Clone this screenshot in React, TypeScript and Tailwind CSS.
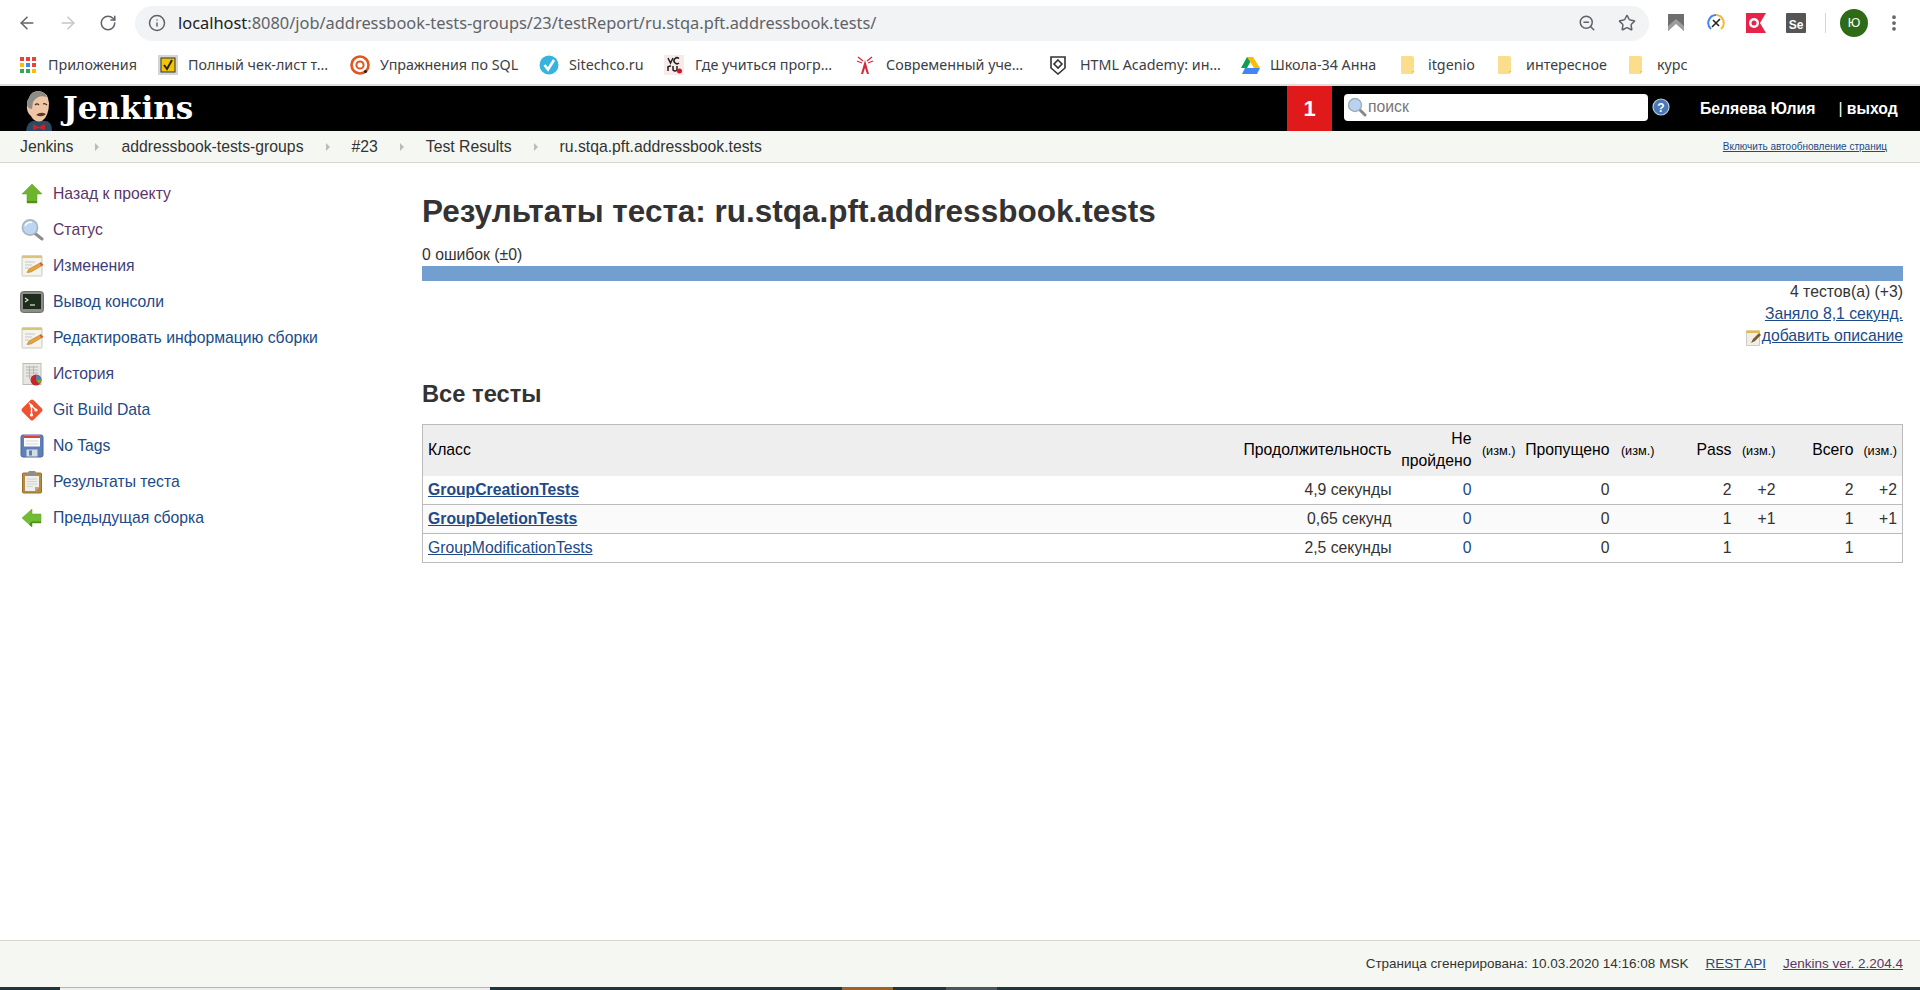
import { ArrowLeft, ArrowRight, Info, MoreVertical, RotateCw, Star, ZoomOut } from 'lucide-react';
import type { ReactNode } from 'react';

const Svg = ({ children, className = 'w-6 h-6', box = '0 0 24 24' }: { children: ReactNode; className?: string; box?: string }) => (
  <svg viewBox={box} className={`${className} shrink-0`}>{children}</svg>
);

// ---- sidebar icons ----
const UpArrow = () => (
  <Svg>
    <path d="M12 2 L22 12 H17 V21 H7 V12 H2 Z" fill="#6cb52d" stroke="#5a9e22" strokeWidth="0.5" />
    <path d="M7 19 H17 V21 H7 Z" fill="#4e8f1c" />
  </Svg>
);
const Magnifier = () => (
  <Svg>
    <path d="M14.5 15 L22 21" stroke="#8c8c8c" strokeWidth="3" strokeLinecap="round" />
    <circle cx="10" cy="9.5" r="7.6" fill="#bcd6f2" stroke="#aab4c0" strokeWidth="1.6" />
    <path d="M5 8 A5.5 5.5 0 0 1 12 4.5" stroke="#fff" strokeWidth="1.4" fill="none" />
  </Svg>
);
const Notepad = () => (
  <Svg>
    <rect x="2" y="2" width="20" height="20" rx="1" fill="#f4f4ec" stroke="#c9c9bd" />
    <rect x="2" y="1.5" width="20" height="2.5" fill="#d9c27c" />
    <path d="M5 8 H15 M5 11 H12 M5 14 H9" stroke="#c5c5c5" strokeWidth="1" />
    <path d="M7 18.5 L9 15 L21 8.5 L23 11 L11 18 Z" fill="#e8a33d" stroke="#a56a1f" strokeWidth="0.5" />
    <path d="M21 8.5 L23 11 L21.5 12 L19.5 9.4 Z" fill="#d9534f" />
  </Svg>
);
const Terminal = () => (
  <Svg>
    <rect x="0.5" y="1.5" width="23" height="21" rx="3" fill="#8b8d86" stroke="#6d6f69" />
    <rect x="3" y="4" width="18" height="15" fill="#1e2c1d" />
    <path d="M5 8 L8 10 L5 12" stroke="#dfe8df" strokeWidth="1.1" fill="none" />
    <path d="M10 15 H15" stroke="#dfe8df" strokeWidth="1.2" />
  </Svg>
);
const History = () => (
  <Svg>
    <rect x="3" y="1.5" width="18" height="21" fill="#e6e6e2" stroke="#bdbdb8" />
    <path d="M6 5 H18 M6 8 H18 M6 11 H18 M6 14 H12 M9.5 4 V17 M13.5 4 V12" stroke="#b5b8b0" strokeWidth="1" />
    <circle cx="16" cy="18" r="5.5" fill="#c8242b" />
    <path d="M16 18 L16 13 A5.5 5.5 0 0 1 21.5 18 Z" fill="#4a7fb8" />
    <path d="M16 18 L21.5 18 A5.5 5.5 0 0 1 19 22 Z" fill="#7aa83a" />
  </Svg>
);
const GitIcon = () => (
  <Svg>
    <rect x="4" y="4" width="16" height="16" rx="2" transform="rotate(45 12 12)" fill="#f0522f" />
    <path d="M9 5 L16 12 M11.5 8 V17" stroke="#fff" strokeWidth="1.4" />
    <circle cx="11.5" cy="8" r="1.6" fill="#fff" />
    <circle cx="16" cy="12" r="1.6" fill="#fff" />
    <circle cx="11.5" cy="17" r="1.6" fill="#fff" />
  </Svg>
);
const Floppy = () => (
  <Svg>
    <rect x="1" y="1" width="22" height="22" rx="2" fill="#5d80b8" stroke="#4a6898" />
    <rect x="4" y="1.5" width="16" height="11" fill="#fbfbfb" />
    <rect x="4" y="1.5" width="16" height="2.5" fill="#d8433c" />
    <path d="M6 7 H18 M6 10 H18" stroke="#cfcfcf" strokeWidth="0.8" />
    <rect x="6.5" y="15.5" width="11" height="7" fill="#d7dbe2" />
    <rect x="9" y="16.5" width="3" height="5" fill="#5d80b8" />
  </Svg>
);
const Clipboard = () => (
  <Svg>
    <rect x="2.5" y="3" width="19" height="20" rx="1" fill="#b98a42" stroke="#9a7030" />
    <path d="M5 6 H19 V17 L15 21 H5 Z" fill="#eeeeec" />
    <path d="M15 21 L15 17 H19 Z" fill="#a8a8a4" />
    <path d="M7 9 H17 M7 11.5 H17 M7 14 H17 M7 16.5 H13" stroke="#d2d2cf" strokeWidth="1" />
    <rect x="8" y="1" width="8" height="5" rx="1.5" fill="#8d8f8a" />
  </Svg>
);
const LeftArrow = () => (
  <Svg>
    <path d="M2 12 L12 3 V8 H21 V17 H12 V21 Z" fill="#72bb35" stroke="#62a52a" strokeWidth="0.5" />
    <path d="M12 15.5 H21 V17 H12 V21 L9 18.5 Z" fill="#4e8f1c" />
  </Svg>
);

const sideLinks = [
  { icon: <UpArrow />, label: 'Назад к проекту', color: 'text-[#5c3566]' },
  { icon: <Magnifier />, label: 'Статус', color: 'text-[#5c3566]' },
  { icon: <Notepad />, label: 'Изменения', color: 'text-[#3a3f7c]' },
  { icon: <Terminal />, label: 'Вывод консоли', color: 'text-[#204a87]' },
  { icon: <Notepad />, label: 'Редактировать информацию сборки', color: 'text-[#204a87]' },
  { icon: <History />, label: 'История', color: 'text-[#3a3f7c]' },
  { icon: <GitIcon />, label: 'Git Build Data', color: 'text-[#204a87]' },
  { icon: <Floppy />, label: 'No Tags', color: 'text-[#204a87]' },
  { icon: <Clipboard />, label: 'Результаты теста', color: 'text-[#204a87]' },
  { icon: <LeftArrow />, label: 'Предыдущая сборка', color: 'text-[#204a87]' },
];

// ---- bookmark icons ----
const AppsIcon = () => (
  <svg viewBox="0 0 16 16" className="w-4 h-4 shrink-0">
    {['#ea4335', '#ea4335', '#ea4335', '#fbbc05', '#4285f4', '#ea4335', '#34a853', '#34a853', '#fbbc05'].map((c, i) => (
      <rect key={i} x={(i % 3) * 6} y={Math.floor(i / 3) * 6} width="4" height="4" fill={c} />
    ))}
  </svg>
);
const Fav = ({ children }: { children: ReactNode }) => (
  <svg viewBox="0 0 20 20" className="w-5 h-5 shrink-0">{children}</svg>
);
const FolderIcon = () => (
  <svg viewBox="0 0 16 20" className="w-4 h-5 shrink-0">
    <path d="M1 2 Q1 1 2 1 H12 Q14 1 14 3 V16 L12 19 H2 Q1 19 1 18 Z" fill="#fbde8b" />
    <path d="M12 19 V16 H14.5 Z" fill="#eec25c" />
  </svg>
);

const bookmarks = [
  { icon: <AppsIcon />, label: 'Приложения', cls: 'w-[158px] pl-[20px] gap-[12px]' },
  {
    icon: (
      <Fav>
        <rect width="20" height="20" fill="#d5d5d5" />
        <rect x="3" y="3" width="14" height="14" fill="#f5c400" stroke="#333" />
        <path d="M6 10 L9 14 L14 5" stroke="#222" strokeWidth="2" fill="none" />
      </Fav>
    ),
    label: 'Полный чек-лист т...',
    cls: 'w-[192px] gap-[10px]',
  },
  {
    icon: (
      <Fav>
        <circle cx="10" cy="10" r="8.5" fill="none" stroke="#e2561d" strokeWidth="2.6" />
        <circle cx="10" cy="10" r="3.6" fill="none" stroke="#e2561d" strokeWidth="2" />
        <circle cx="15.5" cy="16.5" r="1.6" fill="#222" />
      </Fav>
    ),
    label: 'Упражнения по SQL',
    cls: 'w-[189px] gap-[10px]',
  },
  {
    icon: (
      <Fav>
        <circle cx="10" cy="10" r="9.5" fill="#38b3e0" />
        <path d="M5.5 10 L9 14.5 L15 5" stroke="#fff" strokeWidth="2.6" fill="none" />
      </Fav>
    ),
    label: 'Sitechco.ru',
    cls: 'w-[125px] gap-[10px]',
  },
  {
    icon: (
      <Fav>
        <rect width="20" height="20" fill="#f8e9ea" />
        <path d="M4 3 L6.5 8 L9 3 M15 3.5 A3 3 0 1 0 15 8 M4 11 V16 M4 12 Q5 11 7 11 M9 11 V15 Q11 17 13 15 V11" stroke="#222" strokeWidth="1.5" fill="none" />
        <circle cx="15.5" cy="16" r="2.5" fill="#d7132c" />
      </Fav>
    ),
    label: 'Где учиться прогр...',
    cls: 'w-[191px] gap-[11px]',
  },
  {
    icon: (
      <Fav>
        <path d="M10 5 L14 19 H12 L10 13 L8 19 H6 Z" fill="#d9263a" />
        <path d="M3 2 L8 6 M17 2 L12 6 M2 6 L7 8 M18 6 L13 8" stroke="#d9263a" strokeWidth="1.3" />
      </Fav>
    ),
    label: 'Современный уче...',
    cls: 'w-[193px] gap-[11px]',
  },
  {
    icon: (
      <Fav>
        <path d="M3 2 H17 V13 L10 19 L3 13 Z" fill="#fff" stroke="#333" strokeWidth="1.6" />
        <path d="M10 5 L14 9 L10 13 L6 9 Z" fill="none" stroke="#333" strokeWidth="1.6" />
      </Fav>
    ),
    label: 'HTML Academy: ин...',
    cls: 'w-[192px] gap-[12px]',
  },
  {
    icon: (
      <Fav>
        <path d="M7 1 H13 L7 12 H1 Z" fill="#0f9d58" transform="translate(0 1)" />
        <path d="M13 2 L20 13 H14 L7 2 Z" fill="#fbbc05" />
        <path d="M5 13 H20 L17 19 H2 Z" fill="#4285f4" />
      </Fav>
    ),
    label: 'Школа-34 Анна',
    cls: 'w-[160px] gap-[10px]',
  },
  { icon: <FolderIcon />, label: 'itgenio', cls: 'w-[97px] gap-[12px]' },
  { icon: <FolderIcon />, label: 'интересное', cls: 'w-[131px] gap-[13px]' },
  { icon: <FolderIcon />, label: 'курс', cls: 'w-[70px] gap-[13px]' },
];

// ---- browser extension icons ----
const ExtIcons = () => (
  <div className="flex items-center gap-[20px]">
    <svg viewBox="0 0 20 20" className="w-5 h-5">
      <path d="M2 1 H18 V18 L10 10 L2 18 Z" fill="#6e6e6e" />
      <path d="M2 13 L10 6 L18 13 V18 L10 11 L2 18 Z" fill="#9e9e9e" />
    </svg>
    <svg viewBox="0 0 20 20" className="w-5 h-5">
      <path d="M10 2 A8 8 0 0 0 5 16" fill="none" stroke="#4285f4" strokeWidth="2" />
      <path d="M10 2 A8 8 0 0 1 15 16" fill="none" stroke="#f7b733" strokeWidth="2" />
      <path d="M6 14 L14 6 M7 7 L13 13" stroke="#222" strokeWidth="1.6" />
    </svg>
    <svg viewBox="0 0 20 20" className="w-5 h-5">
      <path d="M0 0 H20 L14 10 L20 20 H0 Z" fill="#e8234a" />
      <circle cx="8" cy="10" r="5" fill="#fff" />
      <circle cx="8" cy="10" r="2.5" fill="#e8234a" />
    </svg>
    <div className="w-5 h-5 bg-[#555] rounded-[1px] flex items-end justify-center text-white text-[12px] leading-[15px] font-bold [font-family:'Liberation_Sans',sans-serif]">Se</div>
  </div>
);

const Crumb = ({ children, last }: { children: string; last?: boolean }) => (
  <>
    <span className="text-[#333]">{children}</span>
    {!last && <span className="mx-[22px] w-0 h-0 border-y-[4px] border-y-transparent border-l-[4px] border-l-[#bbb]" />}
  </>
);

const Izm = () => <span className="text-[12.7px]">(изм.)</span>;

const rows = [
  { name: 'GroupCreationTests', bold: true, dur: '4,9 секунды', pass: '2', passD: '+2', total: '2', totalD: '+2', bg: 'bg-white' },
  { name: 'GroupDeletionTests', bold: true, dur: '0,65 секунд', pass: '1', passD: '+1', total: '1', totalD: '+1', bg: 'bg-[#fafafa]' },
  { name: 'GroupModificationTests', bold: false, dur: '2,5 секунды', pass: '1', passD: '', total: '1', totalD: '', bg: 'bg-white' },
];

const App = () => {
  return (
    <div className="h-[990px] flex flex-col overflow-hidden bg-white text-[15.75px] text-[#333] [font-family:'Liberation_Sans',Arial,sans-serif]">
      {/* Browser toolbar */}
      <div className="h-[45px] flex items-center shrink-0 [font-family:'Noto_Sans',sans-serif]">
        <div className="w-[135px] flex items-center pl-[17px] gap-[21px]">
          <ArrowLeft className="w-5 h-5 text-[#5f6368]" strokeWidth={1.8} />
          <ArrowRight className="w-5 h-5 text-[#c4c6c9]" strokeWidth={1.8} />
          <RotateCw className="w-[18px] h-[18px] text-[#5f6368]" strokeWidth={2} />
        </div>
        <div className="w-[1514px] h-[35px] mt-[1px] rounded-full bg-[#f1f3f4] flex items-center pl-[13px] pr-[13px]">
          <Info className="w-[18px] h-[18px] text-[#5f6368]" strokeWidth={2} />
          <span className="ml-[12px] flex-1 text-[16.4px] text-[#5f6368] whitespace-nowrap">
            <span className="text-[#202124]">localhost</span>:8080/job/addressbook-tests-groups/23/testReport/ru.stqa.pft.addressbook.tests/
          </span>
          <ZoomOut className="w-[18px] h-[18px] text-[#5f6368] mr-[22px]" strokeWidth={2} />
          <Star className="w-[18px] h-[18px] text-[#5f6368]" strokeWidth={2} />
        </div>
        <div className="pl-[17px]">
          <ExtIcons />
        </div>
        <div className="ml-[19px] w-px h-[20px] bg-[#d5d5d5]" />
        <div className="ml-[14px] w-[28px] h-[28px] rounded-full bg-[#2e6b16] text-white text-[13px] flex items-center justify-center">Ю</div>
        <MoreVertical className="ml-[16px] w-5 h-5 text-[#5f6368]" strokeWidth={2.5} />
      </div>

      {/* Bookmarks */}
      <div className="h-[41px] flex items-center shrink-0 border-b-2 border-[#dedede] text-[14.3px] text-[#3c4043] whitespace-nowrap [font-family:'Noto_Sans',sans-serif]">
        {bookmarks.map(b => (
          <div key={b.label} className={`flex items-center shrink-0 ${b.cls}`}>
            {b.icon}
            <span>{b.label}</span>
          </div>
        ))}
      </div>

      {/* Jenkins header */}
      <header className="h-[45px] bg-black flex items-center shrink-0 text-white">
        <div className="w-[1287px] h-full flex items-end pl-[20px]">
          <svg viewBox="0 0 36 41" className="w-[36px] h-[41px] shrink-0">
            <path d="M6 41 Q7 32 13 31 L27 31 Q32 33 32 41 Z" fill="#2a4a63" />
            <path d="M9 8 Q11 1 19 1 Q28 2 29 13 Q29 26 22 31 Q14 33 11 26 Q6 22 7 15 Q7 10 9 8 Z" fill="#f0c6a4" />
            <path d="M9 8 Q11 1 19 1 Q25 2 27 7 Q18 4 13 12 L12 19 Q8 19 7 15 Q7 10 9 8 Z" fill="#8d8d88" />
            <path d="M16 25 Q21 21 26 24 Q22 28 16 25 Z" fill="#5a3a28" />
            <path d="M15 15 Q17 13 19 15 M23 14 Q25 13 27 15" stroke="#333" strokeWidth="1.2" fill="none" />
            <path d="M13 34 L19 37 L25 34 V40 L19 38 L13 40 Z" fill="#d5202a" />
          </svg>
          <span className="self-center ml-[7px] text-[31px] font-bold leading-none [font-family:'DejaVu_Serif',serif]">Jenkins</span>
        </div>
        <div className="w-[45px] h-full bg-[#e01a1a] flex items-center justify-center text-[22px] font-bold">1</div>
        <div className="ml-[12px] mb-[3px] w-[304px] h-[27px] rounded-[4px] bg-white flex items-center pl-[3px]">
          <svg viewBox="0 0 20 20" className="w-[20px] h-[20px] shrink-0">
            <path d="M12 12 L18 18" stroke="#888" strokeWidth="3" strokeLinecap="round" />
            <circle cx="8" cy="8" r="6.5" fill="#b8d3f0" stroke="#a2acb8" strokeWidth="1.4" />
          </svg>
          <input placeholder="поиск" className="ml-[1px] w-full bg-transparent outline-none text-[15.75px] placeholder:text-[#777]" />
        </div>
        <svg viewBox="0 0 18 18" className="ml-[4px] mb-[3px] w-[18px] h-[18px] shrink-0">
          <circle cx="9" cy="9" r="8" fill="#4a78b5" stroke="#b9cbe3" strokeWidth="1.2" />
          <text x="9" y="13.5" textAnchor="middle" fontSize="12" fontWeight="bold" fill="#fff" fontFamily="Liberation Sans">?</text>
        </svg>
        <span className="ml-[30px] font-bold whitespace-nowrap">Беляева Юлия</span>
        <span className="ml-[23px] font-bold whitespace-nowrap"><span className="font-normal">|</span> выход</span>
      </header>

      {/* Breadcrumbs */}
      <div className="h-[32px] flex items-center justify-between shrink-0 bg-[#f5f8f2] border-b border-[#d3d7cf] pl-[20px] pr-[33px]">
        <div className="flex items-center whitespace-nowrap">
          <Crumb>Jenkins</Crumb>
          <Crumb>addressbook-tests-groups</Crumb>
          <Crumb>#23</Crumb>
          <Crumb>Test Results</Crumb>
          <Crumb last>ru.stqa.pft.addressbook.tests</Crumb>
        </div>
        <a className="text-[10px] text-[#204a87] underline">Включить автообновление страниц</a>
      </div>

      {/* Page body */}
      <div className="flex-1 flex min-h-0">
        <aside className="w-[422px] shrink-0 pl-[20px] pt-[13px]">
          {sideLinks.map(l => (
            <div key={l.label} className={`h-[36px] flex items-center gap-[9px] ${l.color}`}>
              {l.icon}
              <span>{l.label}</span>
            </div>
          ))}
        </aside>

        <main className="flex-1 min-w-0 pr-[17px] pt-[30px]">
          <h1 className="text-[31.5px] leading-[36px] font-bold text-[#333]">Результаты теста: ru.stqa.pft.addressbook.tests</h1>
          <div className="mt-[16px] mb-[1px] leading-[20px]">0 ошибок (±0)</div>
          <div className="h-[15px] bg-[#729fcf]" />
          <div className="text-right leading-[22px]">
            <div>4 тестов(а) (+3)</div>
            <div><a className="text-[#204a87] underline">Заняло 8,1 секунд.</a></div>
            <div className="flex justify-end items-center">
              <svg viewBox="0 0 16 16" className="w-4 h-4 mt-[3px]">
                <rect x="0.5" y="1" width="13" height="14.5" fill="#efefe6" stroke="#bbb" strokeWidth="0.7" />
                <rect x="0.5" y="0.5" width="13" height="2.5" fill="#e3b94e" />
                <path d="M5 13 L7 9 L13 3 L15 5 L9 11 Z" fill="#7a5a2a" />
              </svg>
              <a className="text-[#204a87] underline">добавить описание</a>
            </div>
          </div>

          <h2 className="mt-[34px] text-[23.7px] leading-[26px] font-bold text-[#333]">Все тесты</h2>

          <table className="mt-[17px] w-full table-fixed border-collapse border border-[#bbb]">
            <colgroup>
              <col />
              <col className="w-[170px]" />
              <col className="w-[80px]" />
              <col className="w-[44px]" />
              <col className="w-[94px]" />
              <col className="w-[45px]" />
              <col className="w-[77px]" />
              <col className="w-[44px]" />
              <col className="w-[78px]" />
              <col className="w-[44px]" />
            </colgroup>
            <thead>
              <tr className="h-[51px] bg-[#eeeeee] text-black leading-[22px] [&>th]:font-normal [&>th]:pl-[2px] [&>th]:pr-[5px] [&>th]:text-right">
                <th className="!text-left !pl-[5px]">Класс</th>
                <th>Продолжительность</th>
                <th>Не пройдено</th>
                <th className="whitespace-nowrap"><Izm /></th>
                <th>Пропущено</th>
                <th className="whitespace-nowrap"><Izm /></th>
                <th>Pass</th>
                <th className="whitespace-nowrap"><Izm /></th>
                <th>Всего</th>
                <th className="whitespace-nowrap"><Izm /></th>
              </tr>
            </thead>
            <tbody>
              {rows.map(r => (
                <tr key={r.name} className={`h-[29px] border-b border-[#bbb] ${r.bg} [&>td]:px-[5px] [&>td]:text-right`}>
                  <td className="!text-left">
                    <a className={`text-[#204a87] underline ${r.bold ? 'font-bold' : ''}`}>{r.name}</a>
                  </td>
                  <td>{r.dur}</td>
                  <td className="text-[#204a87]">0</td>
                  <td />
                  <td>0</td>
                  <td />
                  <td>{r.pass}</td>
                  <td>{r.passD}</td>
                  <td>{r.total}</td>
                  <td>{r.totalD}</td>
                </tr>
              ))}
            </tbody>
          </table>
        </main>
      </div>

      {/* Footer */}
      <footer className="h-[47px] flex items-center justify-end gap-[17px] shrink-0 bg-[#f5f8f2] border-t border-[#d3d7cf] pr-[17px] text-[13.5px]">
        <span>Страница сгенерирована: 10.03.2020 14:16:08 MSK</span>
        <a className="text-[#204a87] underline">REST API</a>
        <a className="text-[#5c3566] underline">Jenkins ver. 2.204.4</a>
      </footer>

      {/* Desktop taskbar edge */}
      <div className="h-[3px] flex shrink-0 bg-[#1f3540]">
        <div className="ml-[60px] w-[430px] bg-[#eeeeee] border-t border-[#b5b5b5]" />
        <div className="ml-[352px] w-[51px] bg-[#a0622d]" />
        <div className="ml-[53px] w-[51px] bg-[#4a5560]" />
      </div>
    </div>
  );
};

export default App;
